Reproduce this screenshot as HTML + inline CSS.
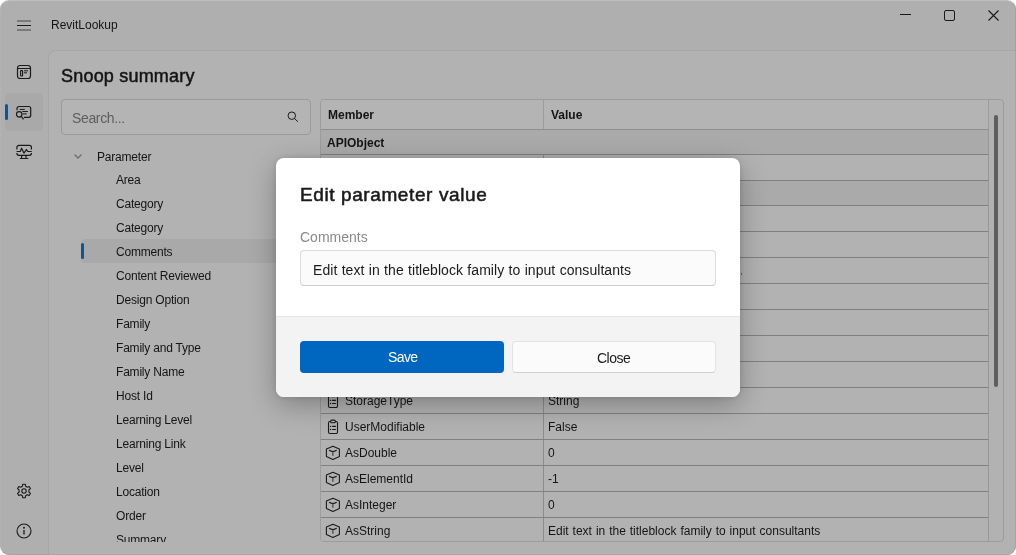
<!DOCTYPE html>
<html><head><meta charset="utf-8">
<style>
*{box-sizing:border-box;margin:0;padding:0}
html,body{width:1016px;height:555px;overflow:hidden;background:#fff;font-family:"Liberation Sans",sans-serif}
.abs{position:absolute}
#win{position:absolute;left:0;top:0;width:1016px;height:555px;border-radius:9px;background:#afafaf;overflow:hidden;will-change:transform}
.t{position:absolute;white-space:nowrap;line-height:1;color:#141414}
#panel{position:absolute;left:48px;top:50px;width:980px;height:520px;border-top-left-radius:8px;background:#b2b2b2;border-left:1px solid #a6a6a6;border-top:1px solid #a6a6a6}
.tree{position:absolute;left:116px;font-size:12px;height:24px;line-height:24px;color:#151515;white-space:nowrap;letter-spacing:-0.2px}
.row{position:absolute;left:1px;width:667px;height:26px;border-bottom:1px solid #8a8a8a}
.grp{background:#aaaaaa}
.cell{position:absolute;font-size:12px;line-height:1;white-space:nowrap;color:#151515}
#dlg{will-change:transform;position:absolute;left:276px;top:158px;width:464px;height:239px;border-radius:8px;background:#fff;overflow:hidden;box-shadow:0 8px 28px rgba(0,0,0,0.28),0 0 6px rgba(0,0,0,0.12)}
</style></head><body>
<div id="win">
  <!-- hamburger -->
  <div class="abs" style="left:17px;top:20px;width:14px;height:2px;background:#7a7a7a"></div>
  <div class="abs" style="left:17px;top:25px;width:14px;height:1px;background:#1a1a1a"></div>
  <div class="abs" style="left:17px;top:29px;width:14px;height:2px;background:#7a7a7a"></div>
  <div class="t" style="left:51px;top:19px;font-size:12px;letter-spacing:0px">RevitLookup</div>
  <!-- window controls -->
  <div class="abs" style="left:900px;top:14px;width:11px;height:1px;background:#1a1a1a"></div>
  <div class="abs" style="left:944px;top:10px;width:11px;height:11px;border:1px solid #1a1a1a;border-radius:2px"></div>
  <svg class="abs" style="left:987px;top:9px" width="13" height="13" viewBox="0 0 13 13"><path d="M1.5 1.5L11.5 11.5M11.5 1.5L1.5 11.5" stroke="#1a1a1a" stroke-width="1.1" fill="none"/></svg>

  <!-- nav -->
  <svg class="abs" style="left:16px;top:64px" width="16" height="16" viewBox="0 0 16 16" fill="none" stroke="#1a1a1a" stroke-width="1.2"><rect x="1.5" y="1.5" width="13" height="13" rx="2.5"/><path d="M1.5 4.5H14.5"/><rect x="4.6" y="6.6" width="2" height="5.4" rx="0.4" stroke-width="1.1"/><path d="M8 6.8H12M8 8.8H11" stroke-width="1"/></svg>
  <div class="abs" style="left:5px;top:93px;width:38px;height:38px;border-radius:4px;background:#a9a9a9"></div>
  <div class="abs" style="left:5px;top:104px;width:3px;height:16px;border-radius:2px;background:#0a5699"></div>
  <svg class="abs" style="left:15px;top:104px" width="18" height="18" viewBox="0 0 18 18" fill="none" stroke="#1a1a1a" stroke-width="1.2"><path d="M2 6.3V4.5A2 2 0 0 1 4 2.5H13.7A2 2 0 0 1 15.7 4.5V11.3A2 2 0 0 1 13.7 13.3H8.9"/><path d="M4.7 5.4H9.8M7.3 7.5H12.9M7.8 9.9H11.8" stroke-width="1"/><circle cx="4.2" cy="10.3" r="2.75"/><path d="M6.7 12.8L8.5 15.3"/></svg>
  <svg class="abs" style="left:16px;top:144px" width="17" height="17" viewBox="0 0 17 17" fill="none" stroke="#1a1a1a" stroke-width="1.2"><path d="M0.9 5.6V3.4A2 2 0 0 1 2.9 1.4H13.4A2 2 0 0 1 15.4 3.4V5.6M0.9 9.1V9.3A2 2 0 0 0 2.9 11.3H13.4A2 2 0 0 0 15.4 9.3V9.1"/><path d="M0.6 7.5H4.3L5.6 4.2L7.9 9.1L10.4 5.6L11.8 7.5H15.7" stroke-linejoin="round"/><path d="M5.6 11.5V13.9M10 11.5V13.9M3.9 14.5H12.3"/></svg>
  <svg class="abs" style="left:16px;top:483px" width="16" height="16" viewBox="0 0 16 16" fill="none" stroke="#1a1a1a" stroke-width="1.1"><path d="M6.8 1.2H9.2L9.6 3.2L11.3 4.2L13.2 3.5L14.4 5.6L12.9 7V9L14.4 10.4L13.2 12.5L11.3 11.8L9.6 12.8L9.2 14.8H6.8L6.4 12.8L4.7 11.8L2.8 12.5L1.6 10.4L3.1 9V7L1.6 5.6L2.8 3.5L4.7 4.2L6.4 3.2Z" stroke-linejoin="round"/><circle cx="8" cy="8" r="2.2"/></svg>
  <svg class="abs" style="left:16px;top:523px" width="16" height="16" viewBox="0 0 16 16" fill="none" stroke="#1a1a1a" stroke-width="1.1"><circle cx="8" cy="8" r="7"/><path d="M8 7V11.5" stroke-width="1.3"/><circle cx="8" cy="4.8" r="0.4" fill="#1a1a1a"/></svg>

  <!-- content panel -->
  <div id="panel"></div>
  <div class="t" style="left:61px;top:67px;font-size:18px;font-weight:400;-webkit-text-stroke:0.5px #141414;letter-spacing:0.2px;color:#141414">Snoop summary</div>

  <!-- search -->
  <div class="abs" style="left:61px;top:99px;width:250px;height:36px;border:1px solid #9a9a9a;border-radius:4px;background:#b4b4b4"></div>
  <div class="t" style="left:72px;top:111px;font-size:14px;color:#5e5e5e;letter-spacing:-0.35px">Search...</div>
  <svg class="abs" style="left:286px;top:110px" width="14" height="14" viewBox="0 0 14 14" fill="none" stroke="#1a1a1a" stroke-width="1"><circle cx="5.8" cy="5.7" r="3.75"/><path d="M8.6 8.6L11.9 11.7"/></svg>

  <!-- tree -->
  <svg class="abs" style="left:73px;top:153px" width="10" height="7" viewBox="0 0 10 7" fill="none" stroke="#6e6e6e" stroke-width="1.25"><path d="M1.5 1.5L5 5L8.5 1.5"/></svg>
  <div class="tree" style="left:97px;top:145px">Parameter</div>
  <div class="abs" style="left:81px;top:239px;width:240px;height:24px;border-radius:4px;background:#a9a9a9"></div>
  <div class="abs" style="left:81px;top:243px;width:3px;height:16px;border-radius:2px;background:#0a5699"></div>
  <div class="abs" style="left:0;top:0;width:320px;height:542px;overflow:hidden">
  <div class="tree" style="top:168px">Area</div>
  <div class="tree" style="top:192px">Category</div>
  <div class="tree" style="top:216px">Category</div>
  <div class="tree" style="top:240px">Comments</div>
  <div class="tree" style="top:264px">Content Reviewed</div>
  <div class="tree" style="top:288px">Design Option</div>
  <div class="tree" style="top:312px">Family</div>
  <div class="tree" style="top:336px">Family and Type</div>
  <div class="tree" style="top:360px">Family Name</div>
  <div class="tree" style="top:384px">Host Id</div>
  <div class="tree" style="top:408px">Learning Level</div>
  <div class="tree" style="top:432px">Learning Link</div>
  <div class="tree" style="top:456px">Level</div>
  <div class="tree" style="top:480px">Location</div>
  <div class="tree" style="top:504px">Order</div>
  <div class="tree" style="top:528px">Summary</div>
  </div>

  <!-- table -->
  <div class="abs" style="left:320px;top:99px;width:684px;height:443px;border:1px solid #9c9c9c;border-radius:4px;overflow:hidden;background:#b2b2b2">
<div class="abs" style="left:0;top:0;width:668px;height:30px;border-bottom:1px solid #8e8e8e;border-right:1px solid #9c9c9c;background:#b4b4b4"></div>
<div class="abs" style="left:222px;top:0;width:1px;height:29px;background:#9c9c9c"></div>
<div class="cell" style="left:7px;top:9px;font-weight:700">Member</div>
<div class="cell" style="left:230px;top:9px;font-weight:700">Value</div>
<div class="abs" style="left:0;top:30px;width:668px;height:25px;border-bottom:1px solid #808080;border-right:1px solid #989898;background:#aaaaaa">
<div class="cell" style="left:6px;top:7px;font-weight:700">APIObject</div>
</div>
<div class="abs" style="left:0;top:55px;width:668px;height:26px;border-bottom:1px solid #808080;border-right:1px solid #989898;background:#b2b2b2">
<div class="abs" style="left:222px;top:0;width:1px;height:100%;background:#8c8c8c"></div>
</div>
<div class="abs" style="left:0;top:81px;width:668px;height:25px;border-bottom:1px solid #808080;border-right:1px solid #989898;background:#aaaaaa">
</div>
<div class="abs" style="left:0;top:106px;width:668px;height:26px;border-bottom:1px solid #808080;border-right:1px solid #989898;background:#b2b2b2">
<div class="abs" style="left:222px;top:0;width:1px;height:100%;background:#8c8c8c"></div>
</div>
<div class="abs" style="left:0;top:132px;width:668px;height:26px;border-bottom:1px solid #808080;border-right:1px solid #989898;background:#b2b2b2">
<div class="abs" style="left:222px;top:0;width:1px;height:100%;background:#8c8c8c"></div>
</div>
<div class="abs" style="left:0;top:158px;width:668px;height:26px;border-bottom:1px solid #808080;border-right:1px solid #989898;background:#b2b2b2">
<div class="abs" style="left:222px;top:0;width:1px;height:100%;background:#8c8c8c"></div>
</div>
<div class="abs" style="left:0;top:184px;width:668px;height:26px;border-bottom:1px solid #808080;border-right:1px solid #989898;background:#b2b2b2">
<div class="abs" style="left:222px;top:0;width:1px;height:100%;background:#8c8c8c"></div>
</div>
<div class="abs" style="left:0;top:210px;width:668px;height:26px;border-bottom:1px solid #808080;border-right:1px solid #989898;background:#b2b2b2">
<div class="abs" style="left:222px;top:0;width:1px;height:100%;background:#8c8c8c"></div>
</div>
<div class="abs" style="left:0;top:236px;width:668px;height:26px;border-bottom:1px solid #808080;border-right:1px solid #989898;background:#b2b2b2">
<div class="abs" style="left:222px;top:0;width:1px;height:100%;background:#8c8c8c"></div>
</div>
<div class="abs" style="left:0;top:262px;width:668px;height:26px;border-bottom:1px solid #808080;border-right:1px solid #989898;background:#b2b2b2">
<div class="abs" style="left:222px;top:0;width:1px;height:100%;background:#8c8c8c"></div>
</div>
<div class="abs" style="left:0;top:288px;width:668px;height:26px;border-bottom:1px solid #808080;border-right:1px solid #989898;background:#b2b2b2">
<div class="abs" style="left:222px;top:0;width:1px;height:100%;background:#8c8c8c"></div>
<svg class="abs" style="left:1px;top:0px" width="24" height="24" viewBox="0 0 24 24" fill="none" stroke="#1a1a1a" stroke-width="1.1"><path d="M8.5 7.5H7.9A1.4 1.4 0 0 0 6.5 8.9V18.1A1.4 1.4 0 0 0 7.9 19.5H14.1A1.4 1.4 0 0 0 15.5 18.1V8.9A1.4 1.4 0 0 0 14.1 7.5H13.5"/><rect x="8.6" y="6.1" width="4.8" height="2.6" rx="1.3"/><path d="M10.1 12.4H13.9M10.1 15.5H13.9" stroke-width="1.2"/><circle cx="8.5" cy="12.4" r="0.7" fill="#1a1a1a" stroke="none"/><circle cx="8.5" cy="15.5" r="0.7" fill="#1a1a1a" stroke="none"/></svg>
<div class="cell" style="left:24px;top:7px">StorageType</div>
<div class="cell" style="left:227px;top:7px;word-spacing:0.6px">String</div>
</div>
<div class="abs" style="left:0;top:314px;width:668px;height:26px;border-bottom:1px solid #808080;border-right:1px solid #989898;background:#b2b2b2">
<div class="abs" style="left:222px;top:0;width:1px;height:100%;background:#8c8c8c"></div>
<svg class="abs" style="left:1px;top:0px" width="24" height="24" viewBox="0 0 24 24" fill="none" stroke="#1a1a1a" stroke-width="1.1"><path d="M8.5 7.5H7.9A1.4 1.4 0 0 0 6.5 8.9V18.1A1.4 1.4 0 0 0 7.9 19.5H14.1A1.4 1.4 0 0 0 15.5 18.1V8.9A1.4 1.4 0 0 0 14.1 7.5H13.5"/><rect x="8.6" y="6.1" width="4.8" height="2.6" rx="1.3"/><path d="M10.1 12.4H13.9M10.1 15.5H13.9" stroke-width="1.2"/><circle cx="8.5" cy="12.4" r="0.7" fill="#1a1a1a" stroke="none"/><circle cx="8.5" cy="15.5" r="0.7" fill="#1a1a1a" stroke="none"/></svg>
<div class="cell" style="left:24px;top:7px">UserModifiable</div>
<div class="cell" style="left:227px;top:7px;word-spacing:0.6px">False</div>
</div>
<div class="abs" style="left:0;top:340px;width:668px;height:26px;border-bottom:1px solid #808080;border-right:1px solid #989898;background:#b2b2b2">
<div class="abs" style="left:222px;top:0;width:1px;height:100%;background:#8c8c8c"></div>
<svg class="abs" style="left:1px;top:2px" width="24" height="22" viewBox="0 0 24 22" fill="none" stroke="#1a1a1a" stroke-width="1.1" stroke-linejoin="round"><path d="M10.9 4.3L17.4 7.1V14.6L10.9 17.4L4.4 14.6V7.1Z"/><path d="M7.1 8.3Q10.9 10.6 14.7 8.3"/><path d="M10.9 9.6V13.8" stroke-width="0.9"/></svg>
<div class="cell" style="left:24px;top:7px">AsDouble</div>
<div class="cell" style="left:227px;top:7px;word-spacing:0.6px">0</div>
</div>
<div class="abs" style="left:0;top:366px;width:668px;height:26px;border-bottom:1px solid #808080;border-right:1px solid #989898;background:#b2b2b2">
<div class="abs" style="left:222px;top:0;width:1px;height:100%;background:#8c8c8c"></div>
<svg class="abs" style="left:1px;top:2px" width="24" height="22" viewBox="0 0 24 22" fill="none" stroke="#1a1a1a" stroke-width="1.1" stroke-linejoin="round"><path d="M10.9 4.3L17.4 7.1V14.6L10.9 17.4L4.4 14.6V7.1Z"/><path d="M7.1 8.3Q10.9 10.6 14.7 8.3"/><path d="M10.9 9.6V13.8" stroke-width="0.9"/></svg>
<div class="cell" style="left:24px;top:7px">AsElementId</div>
<div class="cell" style="left:227px;top:7px;word-spacing:0.6px">-1</div>
</div>
<div class="abs" style="left:0;top:392px;width:668px;height:26px;border-bottom:1px solid #808080;border-right:1px solid #989898;background:#b2b2b2">
<div class="abs" style="left:222px;top:0;width:1px;height:100%;background:#8c8c8c"></div>
<svg class="abs" style="left:1px;top:2px" width="24" height="22" viewBox="0 0 24 22" fill="none" stroke="#1a1a1a" stroke-width="1.1" stroke-linejoin="round"><path d="M10.9 4.3L17.4 7.1V14.6L10.9 17.4L4.4 14.6V7.1Z"/><path d="M7.1 8.3Q10.9 10.6 14.7 8.3"/><path d="M10.9 9.6V13.8" stroke-width="0.9"/></svg>
<div class="cell" style="left:24px;top:7px">AsInteger</div>
<div class="cell" style="left:227px;top:7px;word-spacing:0.6px">0</div>
</div>
<div class="abs" style="left:0;top:418px;width:668px;height:26px;border-bottom:1px solid #808080;border-right:1px solid #989898;background:#b2b2b2">
<div class="abs" style="left:222px;top:0;width:1px;height:100%;background:#8c8c8c"></div>
<svg class="abs" style="left:1px;top:2px" width="24" height="22" viewBox="0 0 24 22" fill="none" stroke="#1a1a1a" stroke-width="1.1" stroke-linejoin="round"><path d="M10.9 4.3L17.4 7.1V14.6L10.9 17.4L4.4 14.6V7.1Z"/><path d="M7.1 8.3Q10.9 10.6 14.7 8.3"/><path d="M10.9 9.6V13.8" stroke-width="0.9"/></svg>
<div class="cell" style="left:24px;top:7px">AsString</div>
<div class="cell" style="left:227px;top:7px;word-spacing:0.6px">Edit text in the titleblock family to input consultants</div>
</div>
<div class="abs" style="left:673px;top:15px;width:4px;height:272px;border-radius:2px;background:#5e5e5e"></div>
  </div>
</div>

<div class="abs" style="left:0;top:0;width:1016px;height:555px;border-radius:9px;border:1px solid rgba(0,0,0,0.07);border-top-color:rgba(255,255,255,0.2);border-left-color:rgba(255,255,255,0.06);pointer-events:none;z-index:5"></div>
<div class="abs" style="left:741px;top:273px;width:1px;height:2px;background:#a03c3c;z-index:4"></div>
<!-- dialog -->
<div id="dlg">
  <div class="t" style="left:24px;top:27px;font-size:19px;font-weight:400;-webkit-text-stroke:0.55px #1b1b1b;color:#1b1b1b;letter-spacing:0.6px">Edit parameter value</div>
  <div class="t" style="left:24px;top:72px;font-size:14px;color:#8a8a8a">Comments</div>
  <div class="abs" style="left:24px;top:92px;width:416px;height:36px;border:1px solid #dcdcdc;border-bottom-color:#cdcdcd;border-radius:4px;background:#fbfbfb"></div>
  <div class="t" style="left:37px;top:105px;font-size:14px;color:#1b1b1b;letter-spacing:0.05px;word-spacing:0.4px">Edit text in the titleblock family to input consultants</div>
  <div class="abs" style="left:0;top:158px;width:464px;height:81px;background:#f3f3f3;border-top:1px solid #e5e5e5"></div>
  <div class="abs" style="left:24px;top:183px;width:204px;height:32px;border-radius:4px;background:#0067c0"></div>
  <div class="t" style="left:112px;top:192px;font-size:14px;color:#fff;letter-spacing:-0.6px">Save</div>
  <div class="abs" style="left:236px;top:183px;width:204px;height:32px;border-radius:4px;background:#fbfbfb;border:1px solid #e3e3e3;border-bottom-color:#d0d0d0"></div>
  <div class="t" style="left:321px;top:193px;font-size:14px;color:#1b1b1b;letter-spacing:-0.5px">Close</div>
</div>
</body></html>
